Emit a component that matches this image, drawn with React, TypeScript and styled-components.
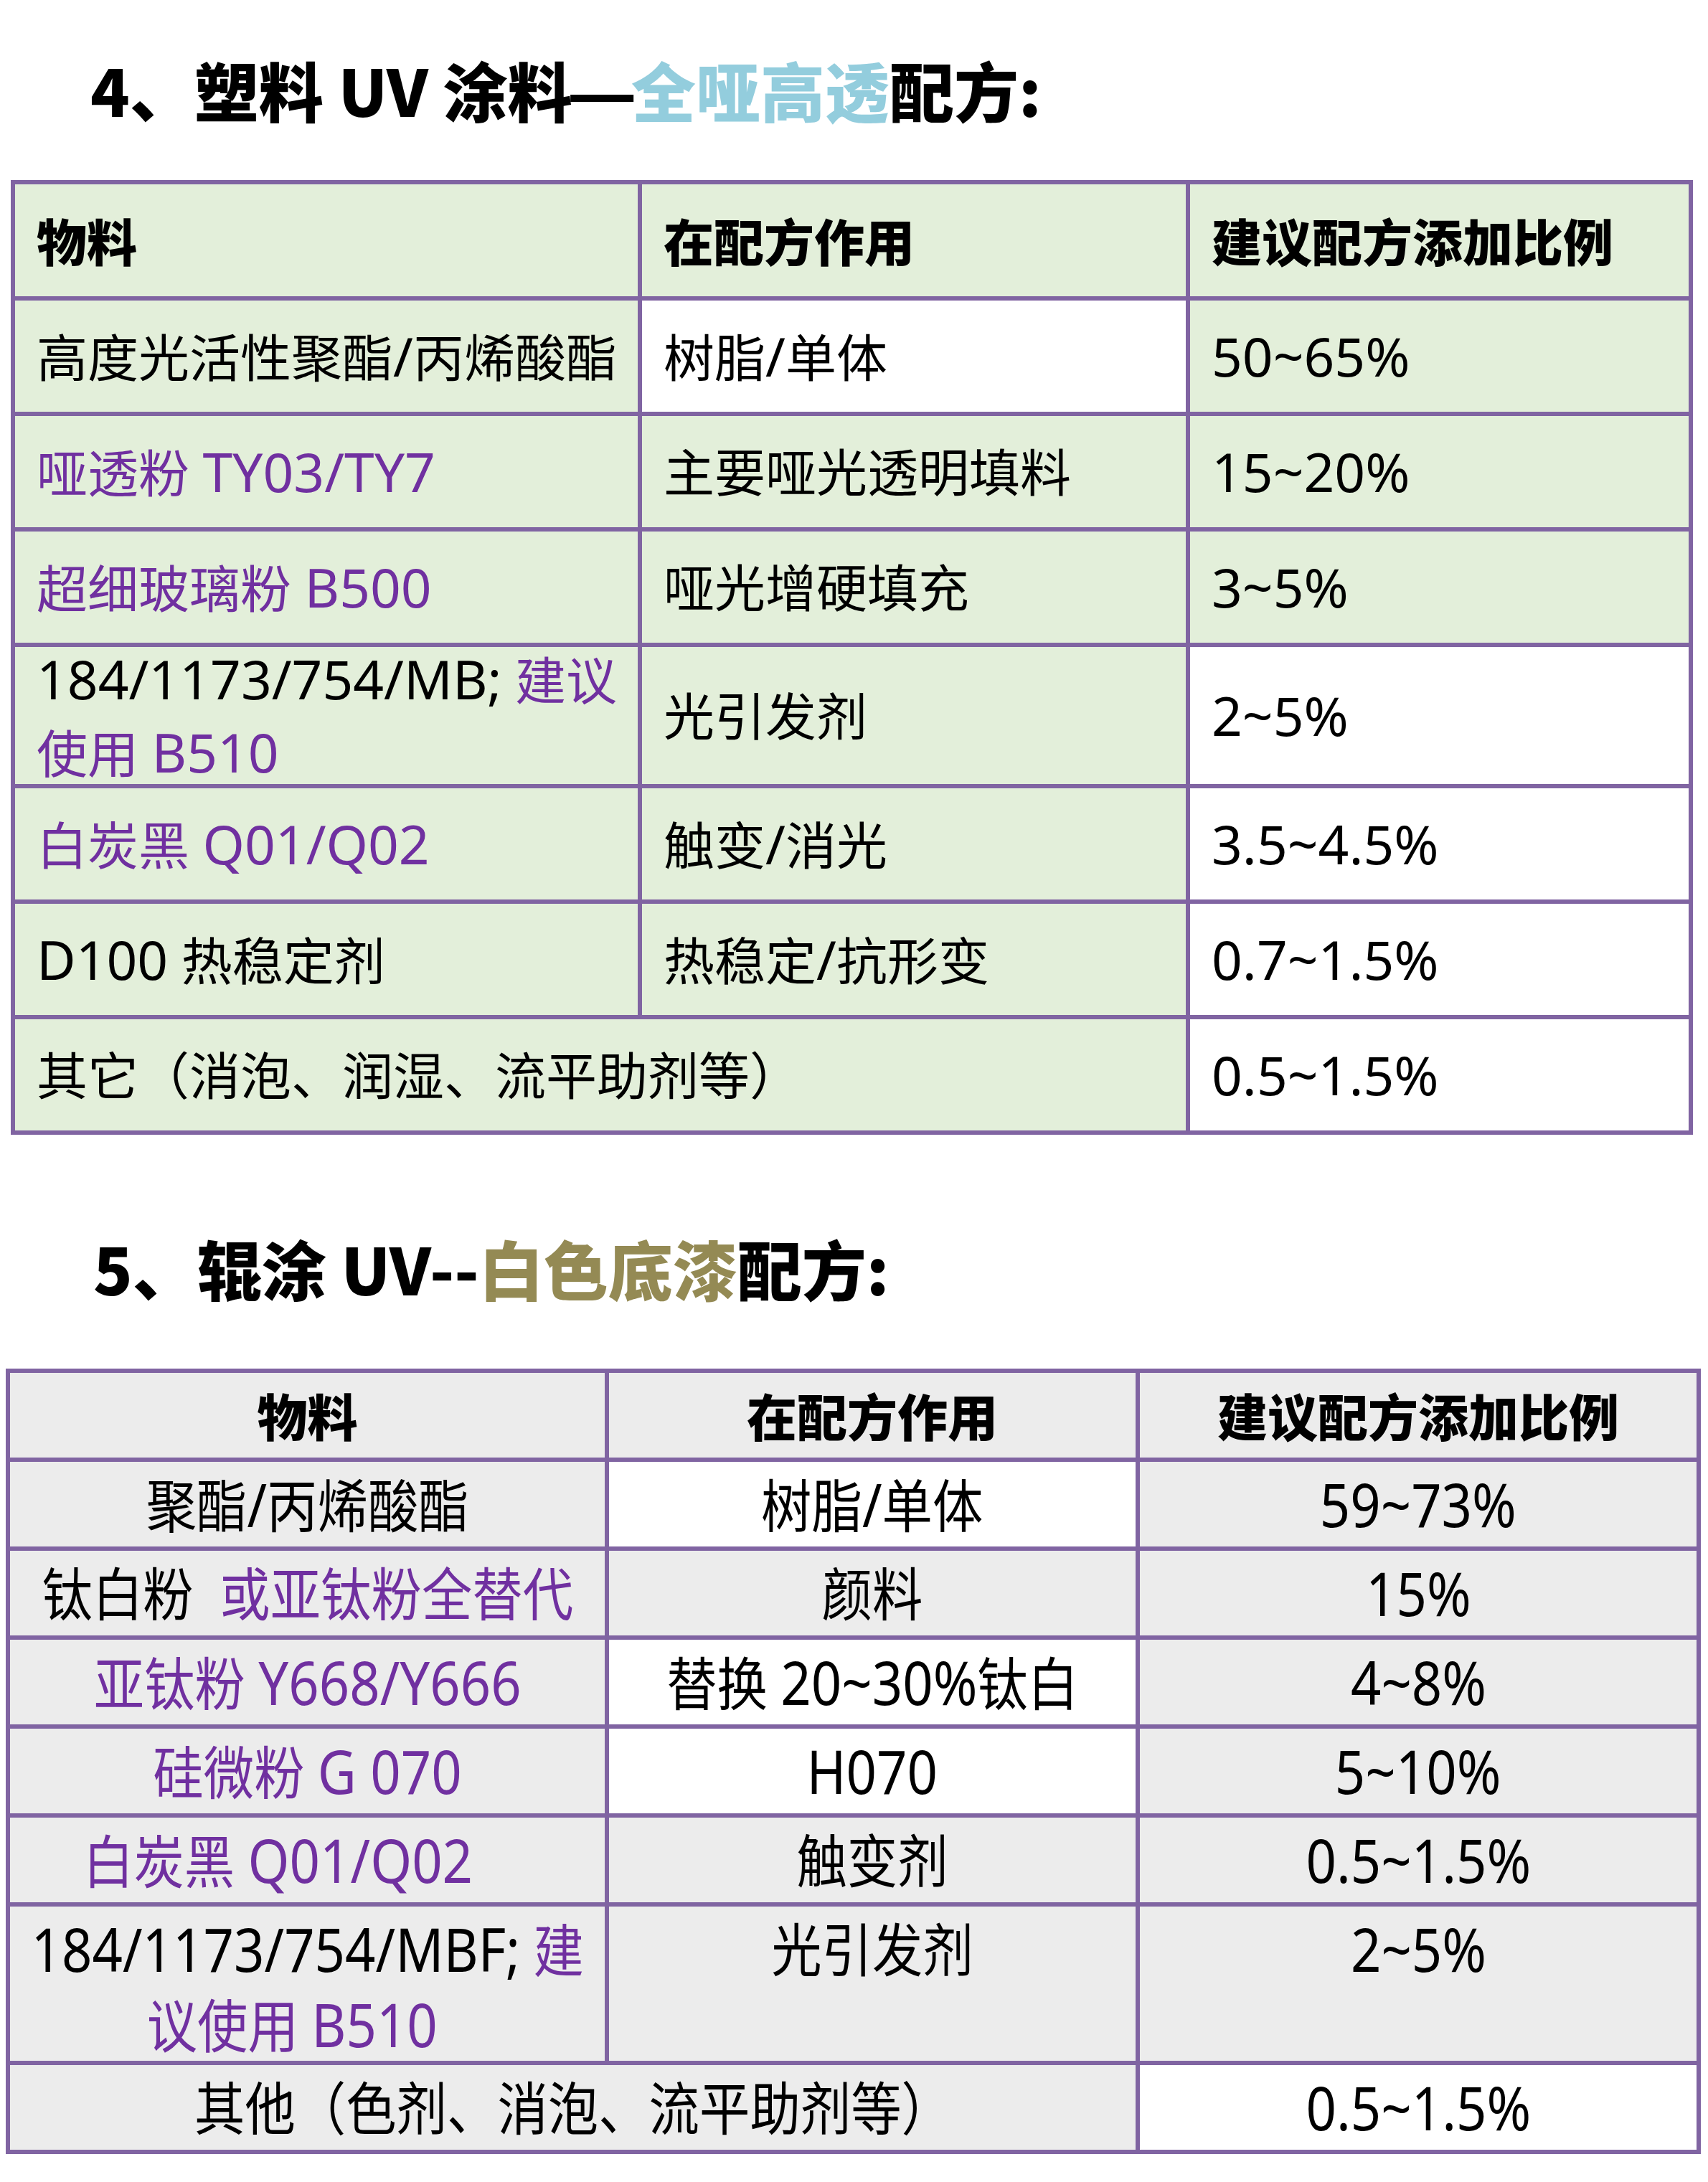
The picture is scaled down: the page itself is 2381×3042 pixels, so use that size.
import React from "react";
import styled, { createGlobalStyle } from "styled-components";

const GlobalStyle = createGlobalStyle`
  html, body { margin: 0; padding: 0; background: #ffffff; }
  body { font-family: "Noto Sans CJK SC", "Noto Sans", sans-serif; color: #000; }
`;

const BORDER = "#8064a2";
const GREEN = "#e3efda";
const GRAY = "#ececec";
const WHITE = "#ffffff";
const BODY_FONT = `"Noto Sans", "Noto Sans CJK SC", sans-serif`;
const HEAD_FONT = `"Noto Sans CJK SC", "Noto Sans", sans-serif`;

const Page = styled.div`
  width: 2381px;
  height: 3042px;
  display: flex;
  flex-direction: column;
  align-items: flex-start;
  overflow: hidden;
  background: #ffffff;
`;

const Title = styled.h2<{ $top: number; $left: number }>`
  margin: ${(p) => p.$top}px 0 0 ${(p) => p.$left}px;
  font-family: ${HEAD_FONT};
  font-size: 90px;
  font-weight: 900;
  line-height: 108px;
  white-space: nowrap;
  color: #000;
`;

const Tint = styled.span<{ $color: string }>`
  color: ${(p) => p.$color};
`;

const Latin = styled.span`
  font-size: 1.055em;
`;

const Dash = styled.span`
  display: inline-block;
  transform: scaleX(1.2);
  transform-origin: center;
`;

const Grid = styled.div<{ $cols: string; $rows: string; $top: number; $left: number; $width: number }>`
  display: grid;
  grid-template-columns: ${(p) => p.$cols};
  grid-template-rows: ${(p) => p.$rows};
  gap: 6px;
  padding: 6px;
  box-sizing: border-box;
  width: ${(p) => p.$width}px;
  margin: ${(p) => p.$top}px 0 0 ${(p) => p.$left}px;
  background: ${BORDER};
`;

const LeftCell = styled.div<{ $bg: string; $span?: number; $head?: boolean }>`
  grid-column: span ${(p) => p.$span ?? 1};
  background: ${(p) => p.$bg};
  display: flex;
  flex-direction: column;
  justify-content: center;
  align-items: flex-start;
  padding: 0 0 0 30px;
  font-family: ${(p) => (p.$head ? HEAD_FONT : BODY_FONT)};
  font-size: ${(p) => (p.$head ? 70 : 71)}px;
  font-weight: ${(p) => (p.$head ? 900 : 400)};
  line-height: 100px;
  white-space: nowrap;
  overflow: visible;
`;

const CenterCell = styled.div<{ $bg: string; $span?: number; $head?: boolean; $shift?: number }>`
  grid-column: span ${(p) => p.$span ?? 1};
  background: ${(p) => p.$bg};
  display: flex;
  flex-direction: column;
  justify-content: ${(p) => (p.$head ? "center" : "flex-start")};
  align-items: center;
  padding: ${(p) => (p.$head ? 0 : 7)}px ${(p) => p.$shift ?? 0}px 0 0;
  font-family: ${(p) => (p.$head ? HEAD_FONT : BODY_FONT)};
  font-size: ${(p) => (p.$head ? 70 : 80)}px;
  font-weight: ${(p) => (p.$head ? 900 : 400)};
  line-height: 104px;
  white-space: nowrap;
  overflow: visible;
`;

const Line = styled.span`
  display: inline-block;
  white-space: nowrap;
`;

const Squeeze = styled.span<{ $shift?: number }>`
  display: inline-block;
  white-space: nowrap;
  text-align: center;
  margin-right: ${(p) => p.$shift ?? 0}px;
  transform: scaleX(0.88);
  transform-origin: center;
`;

/* Splits a string into runs and enlarges the Latin runs (digits, letters, symbols). */
const mix = (s: string): React.ReactNode =>
  s.split(/([\x21-\x7e][\x20-\x7e]*[\x21-\x7e]|[\x21-\x7e])/).map((part, i) =>
    i % 2 === 1 ? <Latin key={i}>{part}</Latin> : <React.Fragment key={i}>{part}</React.Fragment>
  );

const P = (s: string) => <Tint $color="#7030a0">{mix(s)}</Tint>;
const N = (s: string) => <>{mix(s)}</>;

type C = { text: React.ReactNode; bg: string; span?: number; shift?: number };

const t1Head: C[] = [
  { text: "物料", bg: GREEN },
  { text: "在配方作用", bg: GREEN },
  { text: "建议配方添加比例", bg: GREEN },
];

const t1Rows: C[][] = [
  [
    { text: N("高度光活性聚酯/丙烯酸酯"), bg: GREEN },
    { text: N("树脂/单体"), bg: WHITE },
    { text: N("50~65%"), bg: GREEN },
  ],
  [
    { text: P("哑透粉 TY03/TY7"), bg: GREEN },
    { text: N("主要哑光透明填料"), bg: GREEN },
    { text: N("15~20%"), bg: GREEN },
  ],
  [
    { text: P("超细玻璃粉 B500"), bg: GREEN },
    { text: N("哑光增硬填充"), bg: GREEN },
    { text: N("3~5%"), bg: GREEN },
  ],
  [
    {
      text: (
        <>
          <Line>
            {N("184/1173/754/MB; ")}
            {P("建议")}
          </Line>
          <Line>{P("使用 B510")}</Line>
        </>
      ),
      bg: GREEN,
    },
    { text: N("光引发剂"), bg: GREEN },
    { text: N("2~5%"), bg: WHITE },
  ],
  [
    { text: P("白炭黑 Q01/Q02"), bg: GREEN },
    { text: N("触变/消光"), bg: GREEN },
    { text: N("3.5~4.5%"), bg: WHITE },
  ],
  [
    { text: N("D100 热稳定剂"), bg: GREEN },
    { text: N("热稳定/抗形变"), bg: GREEN },
    { text: N("0.7~1.5%"), bg: WHITE },
  ],
  [
    { text: N("其它（消泡、润湿、流平助剂等）"), bg: GREEN, span: 2 },
    { text: N("0.5~1.5%"), bg: WHITE },
  ],
];

const t2Head: C[] = [
  { text: "物料", bg: GRAY },
  { text: "在配方作用", bg: GRAY },
  { text: "建议配方添加比例", bg: GRAY },
];

const t2Rows: C[][] = [
  [
    { text: N("聚酯/丙烯酸酯"), bg: GRAY },
    { text: N("树脂/单体"), bg: WHITE },
    { text: N("59~73%"), bg: GRAY },
  ],
  [
    {
      text: (
        <>
          钛白粉&nbsp;&nbsp;{P("或亚钛粉全替代")}
        </>
      ),
      bg: GRAY,
    },
    { text: N("颜料"), bg: GRAY },
    { text: N("15%"), bg: GRAY },
  ],
  [
    { text: P("亚钛粉 Y668/Y666"), bg: GRAY },
    { text: N("替换 20~30%钛白"), bg: WHITE },
    { text: N("4~8%"), bg: GRAY },
  ],
  [
    { text: P("硅微粉 G 070"), bg: GRAY },
    { text: N("H070"), bg: WHITE },
    { text: N("5~10%"), bg: GRAY },
  ],
  [
    { text: P("白炭黑 Q01/Q02"), bg: GRAY, shift: 82 },
    { text: N("触变剂"), bg: GRAY },
    { text: N("0.5~1.5%"), bg: GRAY },
  ],
  [
    {
      text: (
        <>
          <Squeeze>
            {N("184/1173/754/MBF; ")}
            {P("建")}
          </Squeeze>
          <Squeeze $shift={42}>{P("议使用 B510")}</Squeeze>
        </>
      ),
      bg: GRAY,
    },
    { text: N("光引发剂"), bg: GRAY },
    { text: N("2~5%"), bg: GRAY },
  ],
  [
    { text: N("其他（色剂、消泡、流平助剂等）"), bg: GRAY, span: 2 },
    { text: N("0.5~1.5%"), bg: WHITE },
  ],
];

const isMulti = (row: number, col: number) => row === 5 && col === 0;

export default function App() {
  return (
    <>
      <GlobalStyle />
      <Page>
        <Title $top={70} $left={126}>
          4、塑料 UV 涂料<Dash>—</Dash>
          <Tint $color="#93cddd">全哑高透</Tint>配方:
        </Title>
        <Grid
          $top={73}
          $left={15}
          $width={2345}
          $cols="868px 758px 695px"
          $rows="156px 155px 155px 155px 191px 155px 155px 155px"
        >
          {t1Head.map((c, i) => (
            <LeftCell key={`h${i}`} $bg={c.bg} $head>
              {c.text}
            </LeftCell>
          ))}
          {t1Rows.map((row, r) =>
            row.map((c, i) => (
              <LeftCell key={`${r}-${i}`} $bg={c.bg} $span={c.span}>
                {r === 3 && i === 0 ? c.text : <Line>{c.text}</Line>}
              </LeftCell>
            ))
          )}
        </Grid>

        <Title $top={131} $left={130}>
          5、辊涂 UV--<Tint $color="#948a54">白色底漆</Tint>配方:
        </Title>
        <Grid
          $top={87}
          $left={8}
          $width={2363}
          $cols="829px 734px 776px"
          $rows="118px 118px 118px 118px 118px 118px 215px 118px"
        >
          {t2Head.map((c, i) => (
            <CenterCell key={`h${i}`} $bg={c.bg} $head>
              {c.text}
            </CenterCell>
          ))}
          {t2Rows.map((row, r) =>
            row.map((c, i) => (
              <CenterCell key={`${r}-${i}`} $bg={c.bg} $span={c.span} $shift={c.shift}>
                {isMulti(r, i) ? c.text : <Squeeze>{c.text}</Squeeze>}
              </CenterCell>
            ))
          )}
        </Grid>
      </Page>
    </>
  );
}
